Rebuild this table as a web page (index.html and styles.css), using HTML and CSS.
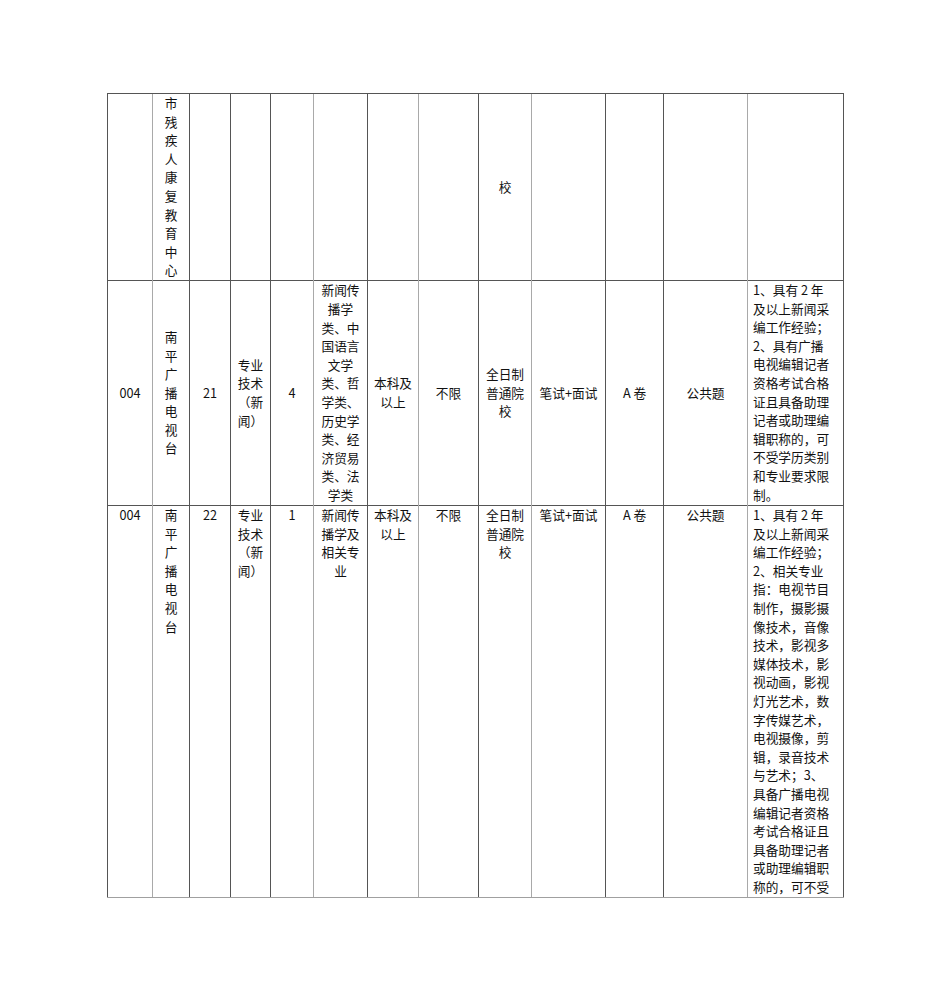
FILE: index.html
```html
<!DOCTYPE html>
<html lang="zh-CN">
<head>
<meta charset="utf-8">
<title>岗位表</title>
<link rel="stylesheet" href="styles.css">
</head>
<body>
<table class="jobs">
  <colgroup>
    <col class="c1"><col class="c2"><col class="c3"><col class="c4"><col class="c5"><col class="c6"><col class="c7">
    <col class="c8"><col class="c9"><col class="c10"><col class="c11"><col class="c12"><col class="c13">
  </colgroup>
  <tbody>
    <tr class="r1">
      <td></td>
      <td class="top">市<br>残<br>疾<br>人<br>康<br>复<br>教<br>育<br>中<br>心</td>
      <td></td><td></td><td></td><td></td><td></td><td></td>
      <td>校</td>
      <td></td><td></td><td></td><td></td>
    </tr>
    <tr class="r2">
      <td>004</td>
      <td>南<br>平<br>广<br>播<br>电<br>视<br>台</td>
      <td>21</td>
      <td>专业<br>技术<br>（新<br>闻）</td>
      <td>4</td>
      <td>新闻传<br>播学<br>类、中<br>国语言<br>文学<br>类、哲<br>学类、<br>历史学<br>类、经<br>济贸易<br>类、法<br>学类</td>
      <td>本科及<br>以上</td>
      <td>不限</td>
      <td>全日制<br>普通院<br>校</td>
      <td>笔试+面试</td>
      <td>A 卷</td>
      <td>公共题</td>
      <td class="note">1、具有 2 年<br>及以上新闻采<br>编工作经验；<br>2、具有广播<br>电视编辑记者<br>资格考试合格<br>证且具备助理<br>记者或助理编<br>辑职称的，可<br>不受学历类别<br>和专业要求限<br>制。</td>
    </tr>
    <tr class="r3">
      <td>004</td>
      <td>南<br>平<br>广<br>播<br>电<br>视<br>台</td>
      <td>22</td>
      <td>专业<br>技术<br>（新<br>闻）</td>
      <td>1</td>
      <td>新闻传<br>播学及<br>相关专<br>业</td>
      <td>本科及<br>以上</td>
      <td>不限</td>
      <td>全日制<br>普通院<br>校</td>
      <td>笔试+面试</td>
      <td>A 卷</td>
      <td>公共题</td>
      <td class="note">1、具有 2 年<br>及以上新闻采<br>编工作经验；<br>2、相关专业<br>指：电视节目<br>制作，摄影摄<br>像技术，音像<br>技术，影视多<br>媒体技术，影<br>视动画，影视<br>灯光艺术，数<br>字传媒艺术，<br>电视摄像，剪<br>辑，录音技术<br>与艺术；3、<br>具备广播电视<br>编辑记者资格<br>考试合格证且<br>具备助理记者<br>或助理编辑职<br>称的，可不受</td>
    </tr>
  </tbody>
</table>
</body>
</html>
```
FILE: styles.css
```css
html, body {
  margin: 0;
  padding: 0;
  background: #ffffff;
}

body {
  font-family: "Noto Sans CJK SC", "Noto Sans", sans-serif;
  color: #111111;
}

.jobs {
  margin: 93px 0 0 107px;
  width: 736px;
  table-layout: fixed;
  border-collapse: collapse;
  font-size: 12.7px;
  line-height: 18.6px;
}

.c1 { width: 45px; }
.c2 { width: 37px; }
.c3 { width: 41px; }
.c4 { width: 40px; }
.c5 { width: 43px; }
.c6 { width: 54px; }
.c7 { width: 51px; }
.c8 { width: 60px; }
.c9 { width: 53px; }
.c10 { width: 74px; }
.c11 { width: 58px; }
.c12 { width: 84px; }
.c13 { width: 96px; }

.jobs td {
  border-left: 1px solid #555555;
  border-top: 1px solid #555555;
  padding: 0 2px;
  text-align: center;
  vertical-align: middle;
  white-space: nowrap;
  overflow: hidden;
}

.jobs td:nth-child(2),
.jobs td:nth-child(6),
.jobs td:nth-child(8),
.jobs td:nth-child(10),
.jobs td:nth-child(13) {
  border-left-color: #a9a9a9;
}

.jobs td:last-child {
  border-right: 1px solid #555555;
}

.r1 { height: 187px; }
.r2 { height: 225px; }
.r3 { height: 392px; }

.r3 td {
  vertical-align: top;
  border-bottom: 1px solid #a0a0a0;
}

.jobs td.top {
  vertical-align: top;
}

.jobs td.note {
  text-align: left;
  vertical-align: top;
  padding: 0 4px 0 5px;
}
```
